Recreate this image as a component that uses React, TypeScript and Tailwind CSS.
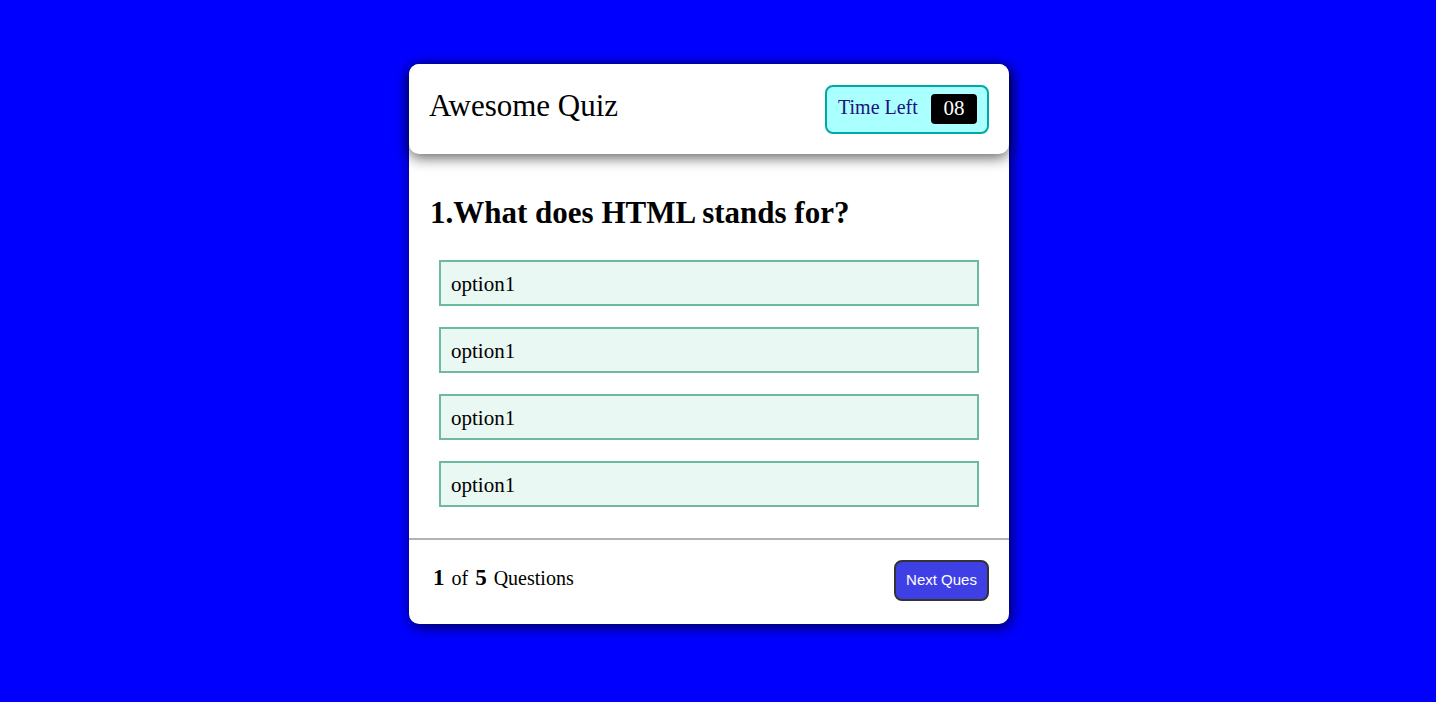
const OPTIONS = ['option1', 'option1', 'option1', 'option1']

export default function App() {
  return (
    <div className="min-h-screen w-full bg-[#0000ff] pt-16 pr-[18px] flex justify-center items-start font-['Liberation_Serif',serif]">
      <div className="w-[600px] h-[560px] bg-white rounded-[10px] shadow-[2px_3px_14px_rgba(0,0,0,0.7)] flex flex-col">
        {/* Header */}
        <header className="relative z-10 h-[90px] shrink-0 bg-white rounded-[10px] shadow-[0_4px_14px_rgba(0,0,0,0.6)] flex items-center justify-between pl-5 pr-5">
          <h1 className="text-[31px] leading-none text-black -mt-2">Awesome Quiz</h1>
          <div className="flex items-center h-[49px] w-[164px] rounded-[8px] border-2 border-[#00a8a8] bg-[#aaffff] pl-[11px] pr-[10px] justify-between">
            <span className="text-[20px] text-[#22117a] -mt-1">Time Left</span>
            <span className="flex items-center justify-center w-[46px] h-[30px] rounded-[4px] bg-black text-white text-[21px]">
              08
            </span>
          </div>
        </header>

        {/* Question */}
        <section className="flex-1 px-[30px] pt-[43px]">
          <h2 className="text-[31px] font-bold leading-none text-black -ml-[9px]">1.What does HTML stands for?</h2>
          <ul className="mt-[32px] flex flex-col gap-[21px]">
            {OPTIONS.map((opt, i) => (
              <li
                key={i}
                className="h-[46px] border-2 border-[#6dbb9c] bg-[#e9f8f2] flex items-center px-[10px] pt-[3px] text-[21px] text-black"
              >
                {opt}
              </li>
            ))}
          </ul>
        </section>

        {/* Footer */}
        <footer className="h-[86px] shrink-0 border-t-2 border-[#b3b3b3] flex items-center justify-between pl-6 pr-5">
          <p className="text-[20px] text-black flex items-baseline gap-[7px] -mt-2">
            <span className="font-bold text-[23px]">1</span>
            <span>of</span>
            <span className="font-bold text-[23px]">5</span>
            <span>Questions</span>
          </p>
          <button className="h-[41px] w-[95px] -mt-1 rounded-[8px] border-2 border-[#333] bg-[#3f3fe6] text-white text-[15px] font-['Liberation_Sans',sans-serif]">
            Next Ques
          </button>
        </footer>
      </div>
    </div>
  )
}
